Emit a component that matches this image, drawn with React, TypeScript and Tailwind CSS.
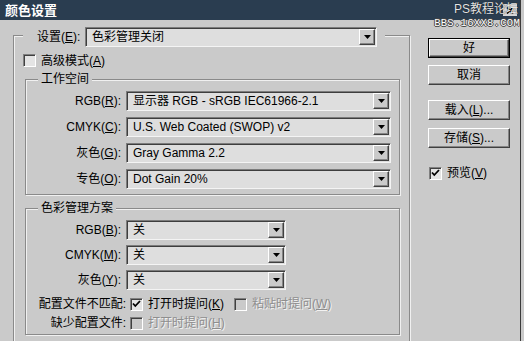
import type { ReactNode } from 'react'

function Ul({ children }: { children: ReactNode }) {
  return <span className="underline underline-offset-[1px]">{children}</span>
}

function Combo({ value, width }: { value: string; width: string }) {
  return (
    <div
      className={`flex h-[20px] items-center border border-t-[#7c7c7c] border-l-[#7c7c7c] border-r-[#f4f4f4] border-b-[#f4f4f4] bg-[#dedede] shadow-[inset_1px_1px_0_#3e3e3e] ${width}`}
    >
      <span className="flex-1 truncate pl-[6px] leading-[18px]">{value}</span>
      <div className="mr-[1px] flex h-[16px] w-[16px] items-center justify-center border border-t-white border-l-white border-r-[#404040] border-b-[#404040] bg-[#cacaca] shadow-[inset_-1px_-1px_0_#858585]">
        <svg width="7" height="4" viewBox="0 0 7 4">
          <polygon points="0,0 7,0 3.5,4" fill="#000" />
        </svg>
      </div>
    </div>
  )
}

function Check({ checked = false, disabled = false }: { checked?: boolean; disabled?: boolean }) {
  return (
    <div
      className={`flex h-[13px] w-[13px] shrink-0 items-center justify-center border border-t-[#808080] border-l-[#808080] border-r-white border-b-white shadow-[inset_1px_1px_0_#404040] ${
        disabled ? 'bg-[#cacaca]' : 'bg-[#e4e4e4]'
      }`}
    >
      {checked && (
        <svg width="9" height="8" viewBox="0 0 9 8">
          <polyline points="1,3.5 3.3,6 8,1" fill="none" stroke="#000" strokeWidth="1.8" />
        </svg>
      )}
    </div>
  )
}

function Button({ children, isDefault = false }: { children: ReactNode; isDefault?: boolean }) {
  const inner = (
    <div className="flex h-full w-full items-center justify-center border border-t-white border-l-white border-r-[#404040] border-b-[#404040] bg-[#cacaca] shadow-[inset_-1px_-1px_0_#858585]">
      {children}
    </div>
  )
  if (isDefault) {
    return <div className="h-[20px] w-[82px] border border-black">{inner}</div>
  }
  return <div className="h-[20px] w-[82px]">{inner}</div>
}

function Row({ label, children }: { label: ReactNode; children: ReactNode }) {
  return (
    <div className="flex items-center">
      <div className="w-[96px] pr-[1px] text-right">{label}</div>
      <div className="ml-[4px]">{children}</div>
    </div>
  )
}

const disabledText = 'text-[#8e8e8e] [text-shadow:1px_1px_0_#f2f2f2]'

export default function App() {
  return (
    <div className="relative h-[341px] w-[524px] overflow-hidden bg-[#cacaca] font-['Liberation_Sans','Noto_Sans_CJK_SC',sans-serif] text-[12px] text-black">
      <div className="h-[341px] w-[521px] border-r border-r-[#3a3a3a]">
        {/* title bar */}
        <div className="flex h-[20px] items-center bg-[#2a3d50] pl-[5px]">
          <span className="text-[13px] font-bold leading-none text-white">颜色设置</span>
          <div className="mr-[3px] ml-auto flex h-[12px] w-[14px] items-center justify-center bg-[#d6d6d6]">
            <svg width="8" height="7" viewBox="0 0 8 7">
              <path d="M1 0.5 L7 6.5 M7 0.5 L1 6.5" stroke="#000" strokeWidth="1.6" />
            </svg>
          </div>
        </div>

        <div className="flex items-start pt-[15px]">
          {/* outer settings box */}
          <div className="ml-[13px] h-[320px] w-[397px] border border-[#8a8a8a] shadow-[inset_1px_1px_0_#f0f0f0,1px_1px_0_#f0f0f0]">
            <div className="-mt-[9px] ml-[9px] flex w-fit items-center bg-[#cacaca] pr-[8px] pl-[14px]">
              <span className="w-[48px]">
                设置(<Ul>E</Ul>):
              </span>
              <Combo value="色彩管理关闭" width="w-[292px]" />
            </div>

            <div className="mt-[7px] ml-[9px] flex h-[13px] items-center">
              <Check />
              <span className="ml-[5px]">
                高级模式(<Ul>A</Ul>)
              </span>
            </div>

            {/* working spaces */}
            <div className="mt-[12px] ml-[11px] w-[375px] border border-[#8a8a8a] pb-[5px] shadow-[inset_1px_1px_0_#f0f0f0,1px_1px_0_#f0f0f0]">
              <div className="-mt-[8px] ml-[12px] h-[14px] w-fit bg-[#cacaca] px-[3px] leading-[14px]">工作空间</div>
              <div className="mt-[5px] flex flex-col gap-[6px]">
                <Row label={<>RGB(<Ul>R</Ul>):</>}>
                  <Combo value="显示器 RGB - sRGB IEC61966-2.1" width="w-[265px]" />
                </Row>
                <Row label={<>CMYK(<Ul>C</Ul>):</>}>
                  <Combo value="U.S. Web Coated (SWOP) v2" width="w-[265px]" />
                </Row>
                <Row label={<>灰色(<Ul>G</Ul>):</>}>
                  <Combo value="Gray Gamma 2.2" width="w-[265px]" />
                </Row>
                <Row label={<>专色(<Ul>O</Ul>):</>}>
                  <Combo value="Dot Gain 20%" width="w-[265px]" />
                </Row>
              </div>
            </div>

            {/* color management policies */}
            <div className="mt-[13px] ml-[11px] w-[375px] border border-[#8a8a8a] pb-[4px] shadow-[inset_1px_1px_0_#f0f0f0,1px_1px_0_#f0f0f0]">
              <div className="-mt-[8px] ml-[12px] h-[14px] w-fit bg-[#cacaca] px-[3px] leading-[14px]">色彩管理方案</div>
              <div className="mt-[5px] flex flex-col gap-[5px]">
                <Row label={<>RGB(<Ul>B</Ul>):</>}>
                  <Combo value="关" width="w-[160px]" />
                </Row>
                <Row label={<>CMYK(<Ul>M</Ul>):</>}>
                  <Combo value="关" width="w-[160px]" />
                </Row>
                <Row label={<>灰色(<Ul>Y</Ul>):</>}>
                  <Combo value="关" width="w-[160px]" />
                </Row>
              </div>
              <div className="mt-[7px] flex h-[14px] items-center">
                <div className="w-[100px] text-right">配置文件不匹配:</div>
                <div className="ml-[4px]">
                  <Check checked />
                </div>
                <span className="ml-[5px]">
                  打开时提问(<Ul>K</Ul>)
                </span>
                <div className="ml-[10px]">
                  <Check disabled />
                </div>
                <span className={`ml-[5px] ${disabledText}`}>
                  粘贴时提问(<Ul>W</Ul>)
                </span>
              </div>
              <div className="mt-[5px] flex h-[14px] items-center">
                <div className="w-[100px] text-right">缺少配置文件:</div>
                <div className="ml-[4px]">
                  <Check disabled />
                </div>
                <span className={`ml-[5px] ${disabledText}`}>
                  打开时提问(<Ul>H</Ul>)
                </span>
              </div>
            </div>
          </div>

          {/* right column */}
          <div className="mt-[3px] ml-[18px] flex w-[82px] flex-col">
            <Button isDefault>好</Button>
            <div className="mt-[7px]">
              <Button>取消</Button>
            </div>
            <div className="mt-[15px]">
              <Button>
                载入(<Ul>L</Ul>)...
              </Button>
            </div>
            <div className="mt-[8px]">
              <Button>
                存储(<Ul>S</Ul>)...
              </Button>
            </div>
            <div className="mt-[16px] flex items-center pl-[1px]">
              <Check checked />
              <span className="ml-[5px]">
                预览(<Ul>V</Ul>)
              </span>
            </div>
          </div>
        </div>
      </div>

      {/* forum watermark */}
      <div className="absolute top-[3px] right-[6px] flex flex-col items-end leading-none">
        <span className="text-[12px] text-[#e4e4e4] [text-shadow:0_0_1px_#000]">PS教程论坛</span>
        <span className="mt-[3px] -mr-[2px] font-['Liberation_Mono',monospace] text-[10.5px] tracking-[0.3px] text-white [text-shadow:1px_0_0_#444,-1px_0_0_#444,0_1px_0_#444,0_-1px_0_#444]">
          BBS.16XX8.COM
        </span>
      </div>
    </div>
  )
}
